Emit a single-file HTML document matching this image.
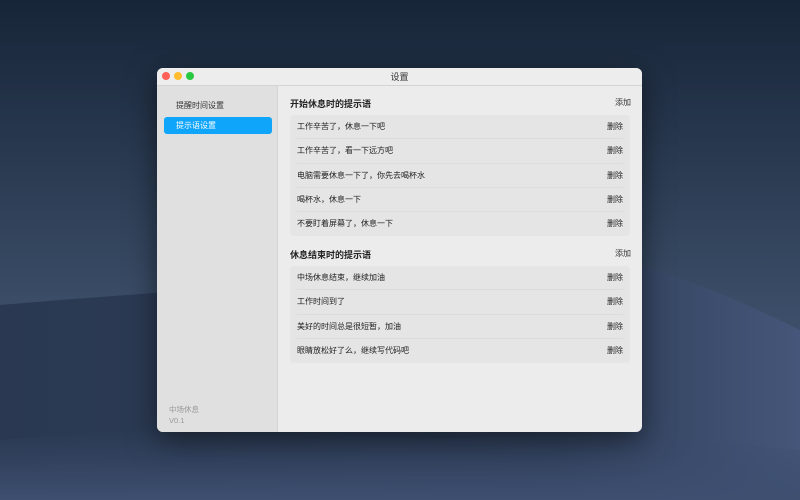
<!DOCTYPE html>
<html><head><meta charset="utf-8"><style>
*{margin:0;padding:0;box-sizing:border-box}
body{width:800px;height:500px;overflow:hidden;position:relative;font-family:"Liberation Sans","Noto Sans CJK SC",sans-serif;background:#22324a}
svg.bg{position:absolute;left:0;top:0}
.win{position:absolute;left:157px;top:68px;width:485px;height:364px;border-radius:6px;overflow:hidden;background:#ececec;box-shadow:0 8px 30px rgba(0,0,0,.5)}
.title{height:18px;background:#ededed;border-bottom:1px solid #d4d4d4;text-align:center;font-size:9px;line-height:18px;color:#333}
.dot{position:absolute;top:4px;width:8px;height:8px;border-radius:50%}
.side{position:absolute;left:0;top:18px;width:121px;bottom:0;background:#e0e0e0;border-right:1px solid #d4d4d4}
.side .it{position:absolute;left:7px;width:108px;height:17px;font-size:8px;line-height:17px;padding-left:12px;color:#333;border-radius:3px}
.side .sel{background:#0ea5fb;color:#fff}
.ver{position:absolute;left:12px;font-size:7.5px;color:#999}
.sec{position:absolute;left:133px;width:340px}
.sh{height:22px;font-size:9px;font-weight:bold;color:#222;position:relative;line-height:22px}
.sh span{position:absolute;right:-1px;top:-1px;font-weight:normal;font-size:8px;color:#333}
.card{background:#e5e5e5;border-radius:4px;padding:0 7px}
.row{height:24.3px;line-height:24px;font-size:8px;color:#222;border-bottom:1px solid #dcdcdc;position:relative}
.row:last-child{border-bottom:none}
.row span{position:absolute;right:0;top:0}
</style></head><body>
<svg class="bg" width="800" height="500">
<defs>
<linearGradient id="sky" x1="0" y1="0" x2="0" y2="1"><stop offset="0" stop-color="#172538"/><stop offset=".6" stop-color="#3a4c66"/><stop offset="1" stop-color="#4a5c78"/></linearGradient>
<linearGradient id="d1" x1="0" y1="0" x2="1" y2="0"><stop offset="0" stop-color="#2a3951"/><stop offset=".7" stop-color="#2e3e58"/><stop offset="1" stop-color="#45567a"/></linearGradient>
<linearGradient id="d3" x1="0" y1="0" x2="0" y2="1"><stop offset="0" stop-color="#3a4b6c" stop-opacity="0"/><stop offset="1" stop-color="#3e4f70"/></linearGradient>
</defs>
<rect width="800" height="500" fill="url(#sky)"/>
<path d="M0 305 Q300 280 640 265 Q720 290 800 330 L800 500 L0 500Z" fill="url(#d1)"/>
<path d="M0 500 L0 440 Q200 420 420 440 Q600 430 800 450 L800 500Z" fill="url(#d3)"/>
</svg>
<div class="win">
<div class="title">设置</div>
<div class="dot" style="left:5px;background:#fe5f57"></div>
<div class="dot" style="left:17px;background:#febc2e"></div>
<div class="dot" style="left:29px;background:#28c840"></div>
<div class="side">
<div class="it" style="top:11px">提醒时间设置</div>
<div class="it sel" style="top:31px">提示语设置</div>
<div class="ver" style="top:318px">中场休息</div>
<div class="ver" style="top:330px">V0.1</div>
</div>
<div class="sec" style="top:25px">
<div class="sh">开始休息时的提示语<span>添加</span></div>
<div class="card">
<div class="row">工作辛苦了，休息一下吧<span>删除</span></div>
<div class="row">工作辛苦了，看一下远方吧<span>删除</span></div>
<div class="row">电脑需要休息一下了，你先去喝杯水<span>删除</span></div>
<div class="row">喝杯水，休息一下<span>删除</span></div>
<div class="row">不要盯着屏幕了，休息一下<span>删除</span></div>
</div>
</div>
<div class="sec" style="top:176px">
<div class="sh">休息结束时的提示语<span>添加</span></div>
<div class="card">
<div class="row">中场休息结束，继续加油<span>删除</span></div>
<div class="row">工作时间到了<span>删除</span></div>
<div class="row">美好的时间总是很短暂，加油<span>删除</span></div>
<div class="row">眼睛放松好了么，继续写代码吧<span>删除</span></div>
</div>
</div>
</div>
</body></html>
